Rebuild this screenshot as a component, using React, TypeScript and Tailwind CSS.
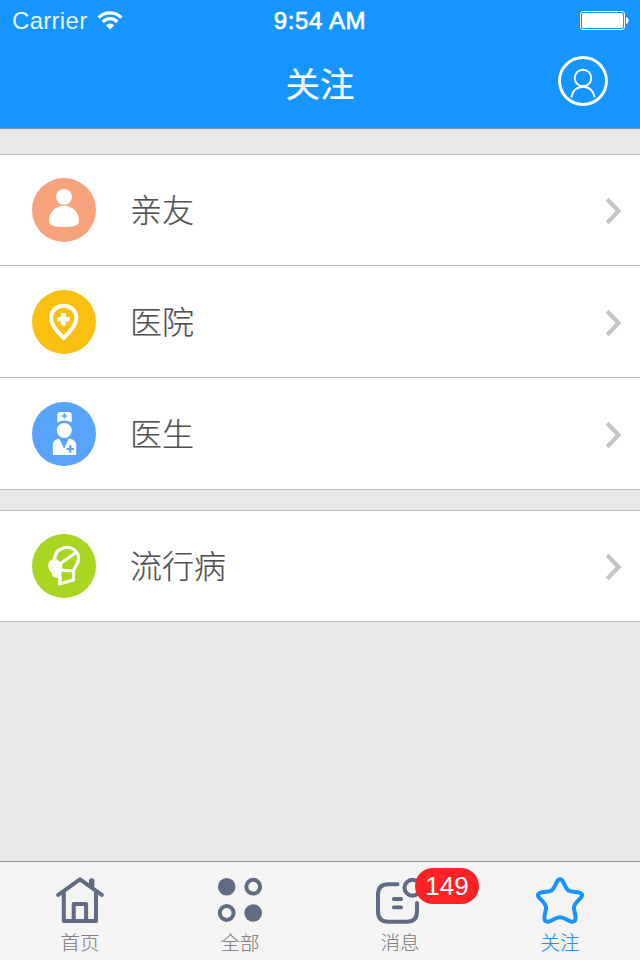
import React from "react";

const cjk = "font-['Noto_Sans_CJK_SC',sans-serif]";
const latin = "font-['Liberation_Sans',Arial,sans-serif]";

function StatusBar() {
  return (
    <div className={`grid h-10 grid-cols-3 items-center text-2xl leading-none text-white ${latin}`}>
      <div className="flex items-center gap-[10px] pl-3 pt-0.5">
        <span className="tracking-[0.3px] opacity-90">Carrier</span>
        <svg width="26" height="20" viewBox="0 0 26 20" fill="none" stroke="#fff" strokeWidth="3.2" className="-mt-0.5">
          <path d="M1.600 7.600a16 16 0 0 1 22.800 0" />
          <path d="M5.700 11.800a10.200 10.200 0 0 1 14.600 0" />
          <path d="M8.800 15.200a6 6 0 0 1 8.400 0L13 19.400z" fill="#fff" stroke="none" />
        </svg>
      </div>
      <div className="pt-0.5 text-center tracking-[0.6px] [-webkit-text-stroke:0.7px_#fff]">9:54 AM</div>
      <div className="flex justify-end pr-[11px] pt-px">
        <svg width="49" height="20" viewBox="0 0 49 20">
          <rect x="0.5" y="0.5" width="44" height="18" rx="2.5" fill="none" stroke="#fff" />
          <rect x="2" y="2" width="41" height="15" rx="1.5" fill="#fff" />
          <path d="M46 6c3.500 1 3.500 6 0 7z" fill="#fff" />
        </svg>
      </div>
    </div>
  );
}

function FriendIcon() {
  return (
    <svg width="64" height="64" viewBox="0 0 64 64">
      <circle cx="32" cy="32" r="32" fill="#f7a47c" />
      <circle cx="32" cy="18.800" r="7.900" fill="#fff" />
      <path d="M32 27.700c8.400 0 15 6.600 15 15.200 0 4.600-5.600 6.100-15 6.100s-15-1.500-15-6.100c0-8.600 6.600-15.200 15-15.200z" fill="#fff" />
    </svg>
  );
}

function HospitalIcon() {
  return (
    <svg width="64" height="64" viewBox="0 0 64 64">
      <circle cx="32" cy="32" r="32" fill="#f9c012" />
      <path d="M31.700 15.700c-7.200 0-12.700 5.300-12.700 12.100 0 6.500 6.500 14.500 12.700 20.200 6.200-5.700 12.700-13.700 12.700-20.200 0-6.800-5.500-12.100-12.700-12.100z" fill="none" stroke="#fff" strokeWidth="4" strokeLinejoin="round" />
      <path d="M31.500 23v12.600M25.200 29.300h12.600" stroke="#fff" strokeWidth="4.600" />
    </svg>
  );
}

function DoctorIcon() {
  return (
    <svg width="64" height="64" viewBox="0 0 64 64">
      <circle cx="32" cy="32" r="32" fill="#57a3fe" />
      <path d="M25.300 20.500V13c0-2 1-3 3-3h8.400c2 0 3 1 3 3v7.500c-4.500-2.800-9.900-2.800-14.400 0z" fill="#fff" />
      <path d="M32.400 11.300v5.400M29.700 14h5.400" stroke="#57a3fe" strokeWidth="1.700" />
      <circle cx="32.300" cy="28.500" r="7.500" fill="#fff" />
      <path d="M20.800 53V43c0-3.500 2.500-6 6.500-6.500L32 46.800l4.700-10.300c4.500.5 7.500 3 7.500 6.500v10z" fill="#fff" />
      <path d="M38.300 43.300v7.400M34.600 47h7.400" stroke="#57a3fe" strokeWidth="2.200" />
    </svg>
  );
}

function EpidemicIcon() {
  return (
    <svg width="64" height="64" viewBox="0 0 64 64">
      <circle cx="32" cy="32" r="32" fill="#a9d620" />
      <g fill="none" stroke="#fff" strokeWidth="3.200" strokeLinejoin="round" strokeLinecap="round">
        <path d="M22.800 26C22.500 20 25.500 16.500 29 15C33 13 38 13.200 41 15C45 17.500 47 21 46.500 25.500C46 30.500 42.500 32.500 41.500 37V46L27.500 50L28.200 43" />
        <path d="M28.500 29.500 44 18.500M28.500 36 41 37" />
      </g>
      <path d="M21 23.500C24.500 25 27.500 27 30 29.800L30 36.500L28.800 43.800C26 44.500 22.500 44 20.500 42L19.800 39L17.500 36.500C15.800 34 15.800 30 17.500 27L20 26Z" fill="#fff" />
    </svg>
  );
}

function Row({ icon, label }: { icon: React.ReactNode; label: string }) {
  return (
    <div className="flex h-28 items-center border-b border-[#bcbcbe] bg-white pl-8 pr-[18px] first:h-[111px]">
      {icon}
      <span className={`ml-[34px] flex-1 pb-1 text-[32px] font-light leading-none text-[#505050] [-webkit-text-stroke:0.2px_#505050] ${cjk}`}>{label}</span>
      <svg width="16" height="28" viewBox="0 0 16 28" className="mt-0.5" fill="none" stroke="#c3c3c8" strokeWidth="4.200">
        <path d="M1.200 2.200 12.600 14 1.200 25.800" />
      </svg>
    </div>
  );
}

function HomeIcon() {
  return (
    <svg width="48" height="48" viewBox="0 0 48 48" fill="none" stroke="#606c82" strokeWidth="4" strokeLinecap="round" strokeLinejoin="round">
      <path d="M2.200 18.800 24 3.300l21.800 15.500" />
      <path d="M7.800 17v28h32.200V17" />
      <path d="M17.700 44V28h12.400v16" />
      <path d="M35.700 9V5" strokeWidth="5.500" />
    </svg>
  );
}

function AllIcon() {
  return (
    <svg width="48" height="48" viewBox="0 0 48 48" fill="none" stroke="#606c82" strokeWidth="4">
      <circle cx="10.700" cy="10.700" r="8.800" fill="#606c82" stroke="none" />
      <circle cx="37.200" cy="10.700" r="6.900" />
      <circle cx="10.700" cy="37" r="6.900" />
      <circle cx="37.200" cy="37" r="8.800" fill="#606c82" stroke="none" />
    </svg>
  );
}

function MessageIcon() {
  return (
    <div className="relative h-12 w-12">
      <svg width="48" height="48" viewBox="0 0 48 48" fill="none" stroke="#606c82" strokeWidth="4" strokeLinecap="round">
        <path d="M21.500 8.200H12.500C5.500 8.200 2 11.700 2 18.500V35.500C2 42.300 5.500 45.800 12.500 45.800H30.500C37.500 45.800 41 42.300 41 35.500V27" />
        <circle cx="36.500" cy="11.700" r="8" />
        <path d="M17.800 23h7.400M17.800 31.300h7.400" strokeWidth="3.800" />
      </svg>
      <span className={`absolute -top-2 left-[39px] flex h-9 w-16 items-center justify-center rounded-full bg-[#fd2226] text-[26px] leading-none text-white ${latin}`}>
        149
      </span>
    </div>
  );
}

function StarIcon() {
  return (
    <svg width="48" height="48" viewBox="0 0 48 48" fill="none" stroke="#1795ff" strokeWidth="4" strokeLinejoin="round">
      <path d="M21.500 4.800Q24 1.500 26.500 4.800C29 8.500 29.500 12.500 32.500 14.500C36 16.500 40 15.500 44 16.800Q47.500 18.300 45 21.500C42 25 38.500 27.500 38 31C37.600 35 40 38.500 39.500 43Q38.800 46.500 35 45.500C31 44 28 41.300 24 41.300C20 41.300 17 44 13 45.500Q9.200 46.500 8.500 43C8 38.500 10.400 35 10 31C9.500 27.500 6 25 3 21.500Q.5 18.300 4 16.800C8 15.500 12 16.500 15.500 14.500C18.500 12.500 19 8.500 21.500 4.800Z" />
    </svg>
  );
}

function Tab({ icon, label, active = false }: { icon: React.ReactNode; label: string; active?: boolean }) {
  return (
    <div className="flex flex-1 flex-col items-center pt-3.5">
      {icon}
      <span className={`mt-2 text-[19.5px] font-light leading-none ${cjk} ${active ? "text-[#1795ff] [-webkit-text-stroke:0.2px_#1795ff]" : "text-[#808080] [-webkit-text-stroke:0.1px_#808080]"}`}>{label}</span>
    </div>
  );
}

export default function App() {
  return (
    <div className="flex h-[960px] w-[640px] flex-col overflow-hidden bg-[#e8e8e8]">
      <header className="h-[129px] border-b border-[#8295a8] bg-[#1495ff]">
        <StatusBar />
        <div className="grid h-[88px] grid-cols-[1fr_auto_1fr] items-center">
          <span />
          <h1 className={`pb-1 text-[34.5px] font-normal leading-none text-white [-webkit-text-stroke:0.2px_#fff] ${cjk}`}>关注</h1>
          <svg width="50" height="50" viewBox="0 0 50 50" className="mb-1.5 mr-8 justify-self-end" fill="none" stroke="#fff">
            <circle cx="25" cy="25" r="23.500" strokeWidth="2.900" />
            <circle cx="25" cy="22" r="8.300" strokeWidth="1.900" />
            <path d="M13.300 41.300C14.300 34.800 19 30.700 25 30.700S35.700 34.800 36.700 41.300" strokeWidth="1.900" />
          </svg>
        </div>
      </header>

      <main className="flex-1 pt-[25px]">
        <section className="border-t border-[#bcbcbe]">
          <Row icon={<FriendIcon />} label="亲友" />
          <Row icon={<HospitalIcon />} label="医院" />
          <Row icon={<DoctorIcon />} label="医生" />
        </section>
        <section className="mt-5 border-t border-[#bcbcbe]">
          <Row icon={<EpidemicIcon />} label="流行病" />
        </section>
      </main>

      <nav className="flex h-[99px] border-t border-[#929592] bg-[#f4f4f4]">
        <Tab icon={<HomeIcon />} label="首页" />
        <Tab icon={<AllIcon />} label="全部" />
        <Tab icon={<MessageIcon />} label="消息" />
        <Tab icon={<StarIcon />} label="关注" active />
      </nav>
    </div>
  );
}
